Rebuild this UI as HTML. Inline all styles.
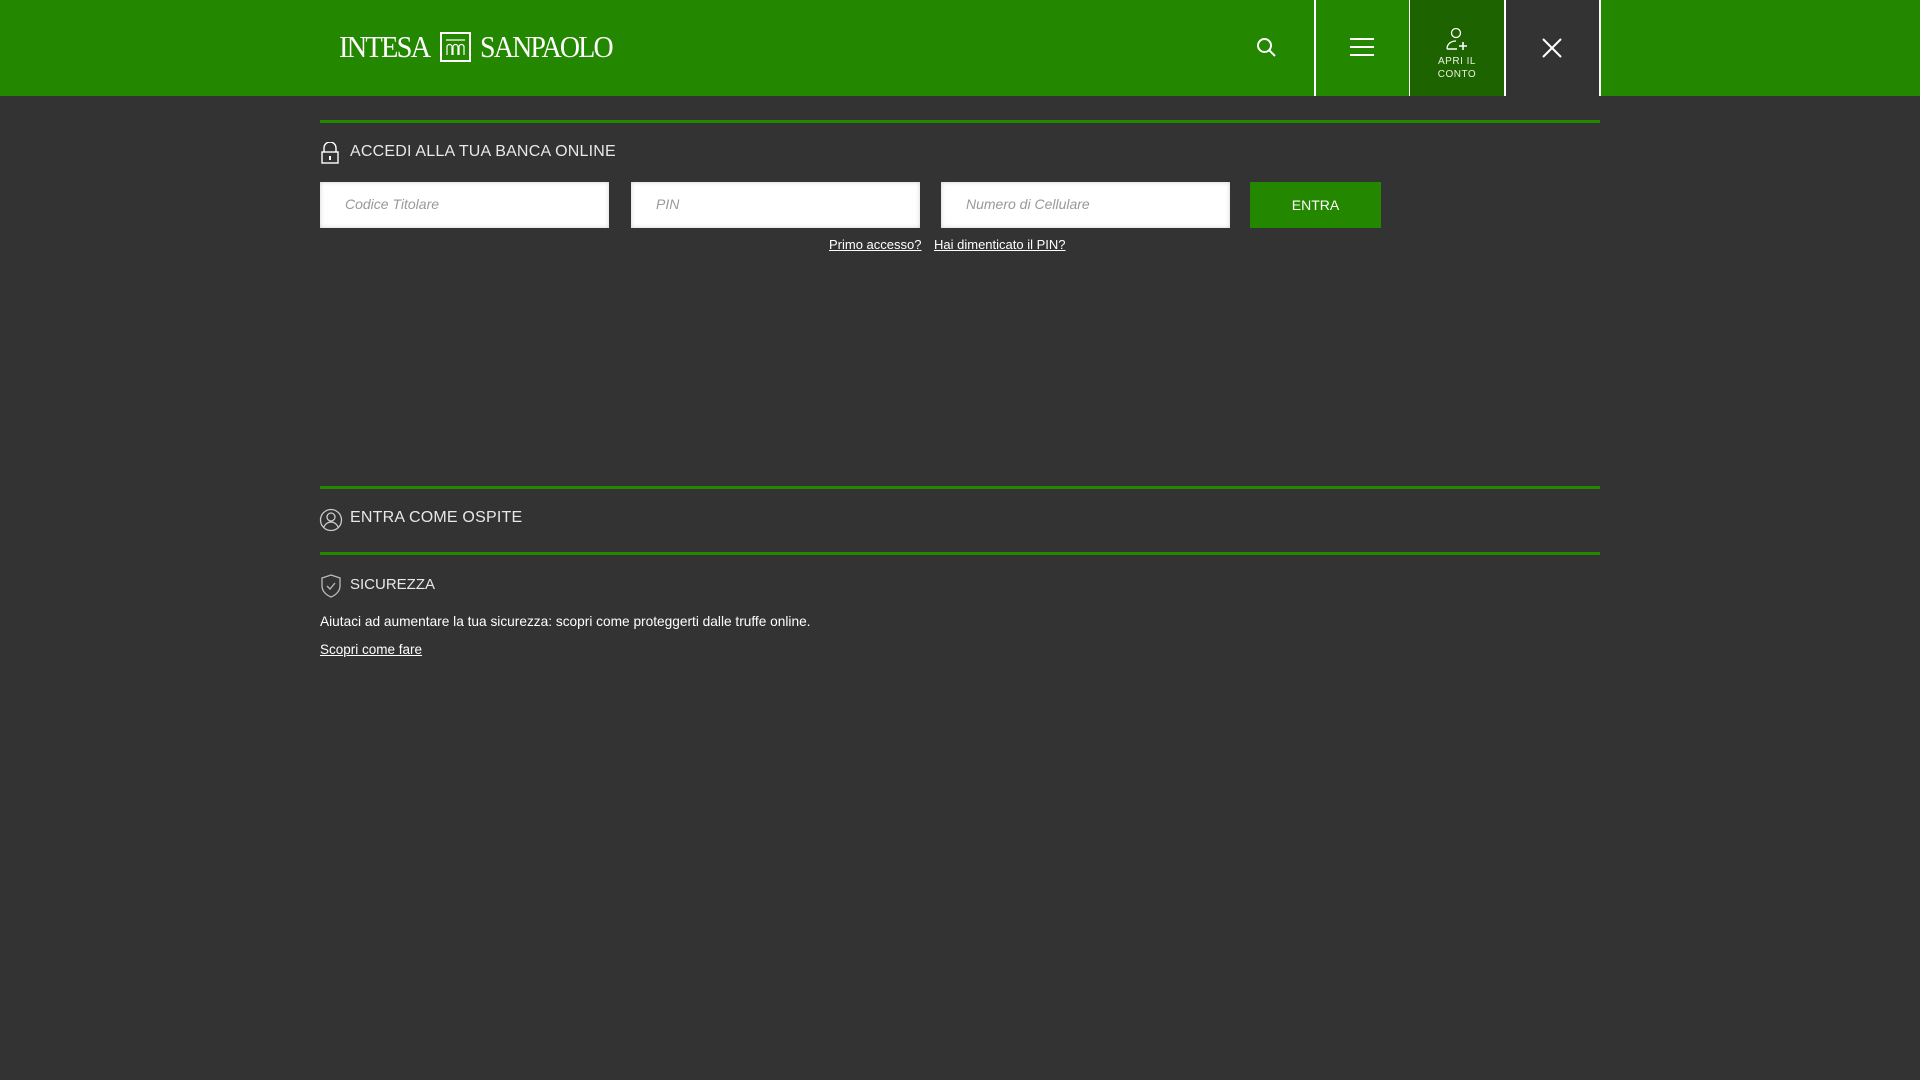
<!DOCTYPE html>
<html><head><meta charset="utf-8"><style>
*{margin:0;padding:0;box-sizing:border-box}
body{width:1920px;height:1080px;background:#333;font-family:"Liberation Sans",sans-serif;color:#fff;position:relative;overflow:hidden}
.hdr{position:absolute;left:0;top:0;width:1920px;height:96px;background:#238700}
.abs{position:absolute}
.logo{font-family:"Liberation Serif",serif;font-size:31px;letter-spacing:-2px;color:#fff;top:31px;line-height:1;transform-origin:0 0;white-space:nowrap}
.vl{position:absolute;top:0;width:2px;height:96px;background:#fff}
.line{position:absolute;left:320px;width:1280px;height:3px;background:#238700}
.ttl{position:absolute;left:350px;font-size:16px;letter-spacing:.2px;color:#e8e8e8}
.inp{position:absolute;top:182px;width:289px;height:46px;background:#fff;color:#999;font-style:italic;font-size:14px;padding:14px 0 0 25px;box-shadow:inset 0 0 4px #ccc}
a{color:#fff;font-size:13px;position:absolute}
</style></head><body>
<div class="hdr">
 <div class="abs logo" style="left:339px;transform:scaleX(0.92)">INTESA</div>
 <div class="abs" style="left:440px;top:32px;width:31px;height:30px;border:2px solid #fff">
  <svg width="27" height="26" viewBox="0 0 27 26"><path d="M4 6h19" stroke="#fff" stroke-width="1.2"/><path d="M5 21v-8a2.5 2.5 0 0 1 5 0v8M11 21v-8a2.5 2.5 0 0 1 5 0v8M17 21v-8a2.5 2.5 0 0 1 5 0v8" stroke="#fff" fill="none" stroke-width="1.2"/></svg>
 </div>
 <div class="abs logo" style="left:480px;transform:scaleX(0.9)">SANPAOLO</div>
 <svg class="abs" style="left:1256px;top:37px" width="22" height="22" viewBox="0 0 22 22"><circle cx="8.5" cy="8.5" r="6.5" stroke="#fff" stroke-width="2" fill="none"/><path d="M13 13l6 6" stroke="#fff" stroke-width="2"/></svg>
 <div class="vl" style="left:1314px"></div>
 <svg class="abs" style="left:1350px;top:38px" width="24" height="20"><path d="M0 1h24M0 9h24M0 17h24" stroke="#fff" stroke-width="2"/></svg>
 <div class="vl" style="left:1409px"></div>
 <div class="abs" style="left:1410px;top:0;width:94px;height:96px;background:#1d6400"></div>
 <svg class="abs" style="left:1445px;top:27px" width="24" height="24" viewBox="0 0 24 24"><circle cx="11" cy="6" r="4.5" stroke="#fff" stroke-width="1.3" fill="none"/><path d="M2 22c0-5 4-8 9-8" stroke="#fff" stroke-width="1.3" fill="none"/><path d="M2 22h10M18 15v8M14 19h8" stroke="#fff" stroke-width="1.6"/></svg>
 <div class="abs" style="left:1410px;top:55px;width:94px;text-align:center;font-size:10px;line-height:13px;letter-spacing:.5px;color:#e8f0e0">APRI IL<br>CONTO</div>
 <div class="vl" style="left:1504px"></div>
 <div class="abs" style="left:1506px;top:0;width:93px;height:96px;background:#333"></div>
 <svg class="abs" style="left:1542px;top:38px" width="20" height="20"><path d="M1 1l18 18M19 1L1 19" stroke="#fff" stroke-width="2"/></svg>
 <div class="vl" style="left:1599px"></div>
</div>
<div class="line" style="top:120px"></div>
<svg class="abs" style="left:320px;top:142px" width="20" height="22" viewBox="0 0 20 22"><path d="M4 10V6a6 6 0 0 1 12 0v4" stroke="#fff" stroke-width="1.4" fill="none"/><rect x="2" y="10" width="16" height="11" stroke="#fff" stroke-width="1.4" fill="none"/><path d="M10 14v4" stroke="#fff" stroke-width="2"/></svg>
<div class="ttl" style="top:143px">ACCEDI ALLA TUA BANCA ONLINE</div>
<div class="inp" style="left:320px">Codice Titolare</div>
<div class="inp" style="left:631px">PIN</div>
<div class="inp" style="left:941px">Numero di Cellulare</div>
<div class="abs" style="left:1250px;top:182px;width:131px;height:46px;background:#238700;font-size:14px;text-align:center;line-height:46px">ENTRA</div>
<a style="left:829px;top:237px" href="#">Primo accesso?</a>
<a style="left:934px;top:237px" href="#">Hai dimenticato il PIN?</a>
<div class="line" style="top:486px"></div>
<svg class="abs" style="left:319px;top:508px" width="24" height="24" viewBox="0 0 24 24"><circle cx="12" cy="12" r="10.5" stroke="#ccc" stroke-width="1.3" fill="none"/><circle cx="12" cy="9" r="4" stroke="#ccc" stroke-width="1.3" fill="none"/><path d="M5 19c1-3 4-5 7-5s6 2 7 5" stroke="#ccc" stroke-width="1.3" fill="none"/></svg>
<div class="ttl" style="top:509px">ENTRA COME OSPITE</div>
<div class="line" style="top:552px"></div>
<svg class="abs" style="left:320px;top:574px" width="22" height="24" viewBox="0 0 22 24"><path d="M11 1l9 3v8c0 5-4 9-9 11C6 21 2 17 2 12V4z" stroke="#bbb" stroke-width="1.3" fill="none"/><path d="M7 12l3 3 5-6" stroke="#bbb" stroke-width="1.3" fill="none"/></svg>
<div class="ttl" style="top:576px;font-size:15px;letter-spacing:0">SICUREZZA</div>
<div class="abs" style="left:320px;top:614px;font-size:13.7px">Aiutaci ad aumentare la tua sicurezza: scopri come proteggerti dalle truffe online.</div>
<a style="left:320px;top:642px;font-size:13.5px" href="#">Scopri come fare</a>
</body></html>
